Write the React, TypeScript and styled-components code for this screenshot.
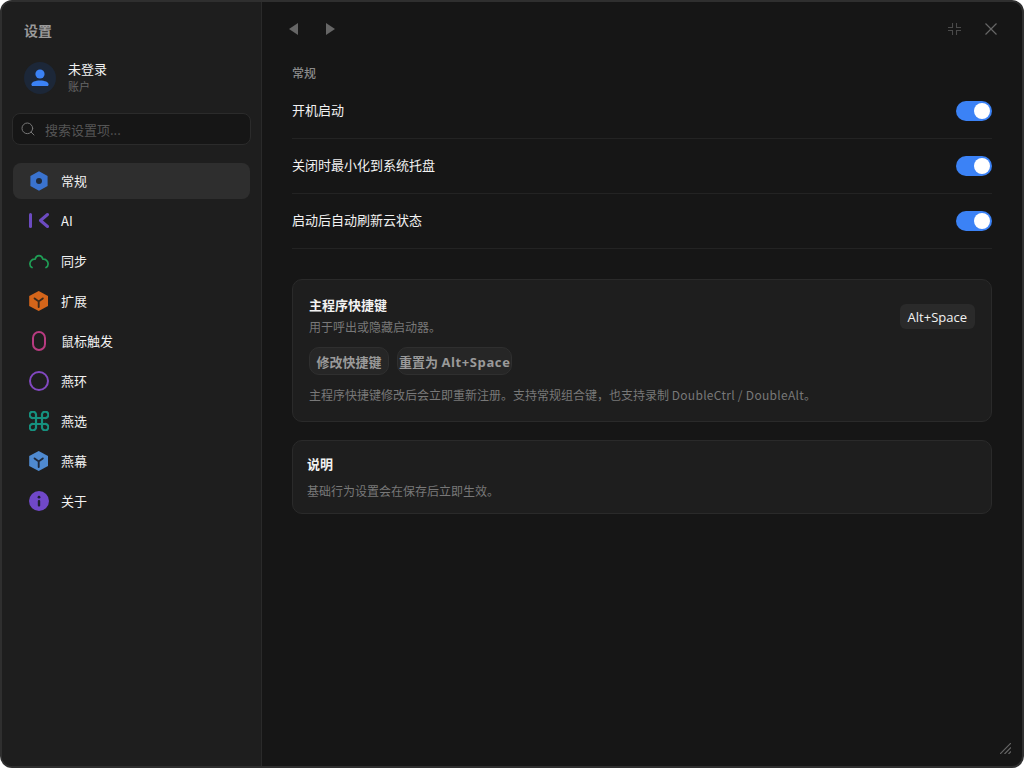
import React from 'react';
import styled, { createGlobalStyle } from 'styled-components';
import { Search } from 'lucide-react';

const Global = createGlobalStyle`
  html, body {
    margin: 0;
    padding: 0;
    background: #fff;
  }
  * {
    box-sizing: border-box;
  }
`;

const Win = styled.div`
  position: relative;
  width: 1024px;
  height: 768px;
  display: flex;
  overflow: hidden;
  border: 2px solid #2f2f2f;
  border-radius: 12px;
  background: #161616;
  font-family: 'Noto Sans CJK SC', 'Inter', sans-serif;
  color: #f2f2f2;
`;

const Side = styled.aside`
  width: 260px;
  flex: none;
  display: flex;
  flex-direction: column;
  padding: 18px 10px 0 10px;
  background: #1e1e1e;
  border-right: 1px solid #2a2a2a;
`;

const SideTitle = styled.div`
  margin-left: 12px;
  font-size: 14px;
  line-height: 20px;
  font-weight: 700;
  color: #9a9a9a;
`;

const User = styled.div`
  height: 32px;
  display: flex;
  align-items: center;
  gap: 12px;
  margin: 22px 0 0 12px;
`;

const Avatar = styled.div`
  width: 32px;
  height: 32px;
  display: flex;
  align-items: center;
  justify-content: center;
  border-radius: 50%;
  background: #1c2738;
`;

const UserText = styled.div`
  display: flex;
  flex-direction: column;
  padding-bottom: 2px;
`;

const UserName = styled.div`
  font-size: 13px;
  line-height: 18px;
`;

const UserSub = styled.div`
  margin-top: 1px;
  font-size: 11px;
  line-height: 15px;
  color: #666;
`;

const SearchBox = styled.div`
  height: 32px;
  margin-top: 19px;
  display: flex;
  align-items: center;
  gap: 9px;
  padding: 0 7px;
  border: 1px solid #2b2b2b;
  border-radius: 8px;
  background: #161616;
  color: #777;
  font-size: 13px;
  span {
    color: #555;
  }
`;

const Nav = styled.nav`
  display: flex;
  flex-direction: column;
  gap: 4px;
  margin: 18px 1px 0 1px;
`;

const NavItem = styled.div<{ $active?: boolean }>`
  height: 36px;
  display: flex;
  align-items: center;
  gap: 12px;
  padding-left: 16px;
  border-radius: 8px;
  font-size: 13px;
  background: ${(p) => (p.$active ? '#2e2e2e' : 'transparent')};
`;

const NavLabel = styled.span`
  margin-bottom: 2px;
`;

const Main = styled.main`
  flex: 1;
  display: flex;
  flex-direction: column;
  padding: 0 30px;
`;

const Top = styled.div`
  height: 62px;
  padding-bottom: 8px;
  display: flex;
  align-items: center;
  justify-content: space-between;
  flex: none;
`;

const TopGroup = styled.div<{ $gap: number; $side: number }>`
  display: flex;
  align-items: center;
  gap: ${(p) => p.$gap}px;
  margin: 0 ${(p) => p.$side}px;
`;

const SectionTitle = styled.div`
  font-size: 12px;
  line-height: 18px;
  font-weight: 500;
  color: #8a8a8a;
`;

const Rows = styled.div`
  margin-top: 2px;
  margin-bottom: 30px;
`;

const Row = styled.div`
  height: 55px;
  display: flex;
  align-items: center;
  justify-content: space-between;
  border-bottom: 1px solid #232323;
  font-size: 13px;
`;

const RowLabel = styled.span`
  margin-bottom: 4px;
`;

const Toggle = styled.div`
  width: 36px;
  height: 20px;
  padding: 2px;
  display: flex;
  justify-content: flex-end;
  border-radius: 10px;
  background: #3b82f6;
  &::after {
    content: '';
    width: 16px;
    height: 16px;
    border-radius: 50%;
    background: #fff;
  }
`;

const Card = styled.section<{ $pad: string }>`
  padding: ${(p) => p.$pad};
  margin-bottom: 18px;
  border: 1px solid #2a2a2a;
  border-radius: 10px;
  background: #1e1e1e;
`;

const CardHead = styled.div`
  display: flex;
  justify-content: space-between;
  align-items: flex-start;
`;

const CardTitle = styled.div`
  font-size: 13px;
  line-height: 18px;
  font-weight: 700;
`;

const Muted = styled.div<{ $top?: number }>`
  margin-top: ${(p) => p.$top ?? 4}px;
  font-size: 12px;
  line-height: 16px;
  color: #787878;
`;

const Latin = styled.span<{ $space: number }>`
  letter-spacing: ${(p) => p.$space}px;
`;

const Chip = styled.div`
  height: 25px;
  margin-top: 8px;
  display: flex;
  align-items: center;
  padding: 0 8px;
  border-radius: 6px;
  background: #2a2a2a;
  font-size: 13px;
  font-family: 'Open Sans', 'Noto Sans CJK SC', sans-serif;
`;

const Buttons = styled.div`
  display: flex;
  gap: 8px;
  margin-top: 12px;
`;

const Btn = styled.button<{ $pad: number }>`
  height: 28px;
  padding: 0 ${(p) => p.$pad}px;
  border: 1px solid #2f2f2f;
  border-radius: 10px;
  background: #262626;
  color: #9a9a9a;
  font-family: 'Open Sans', 'Noto Sans CJK SC', sans-serif;
  font-size: 13px;
  font-weight: 700;
  white-space: nowrap;
`;

const Grip = styled.svg`
  position: absolute;
  right: 11px;
  bottom: 12px;
`;

const HexCore = () => (
  <svg width="20" height="20" viewBox="0 0 20 20">
    <path d="M10 .2 18.6 5v10L10 19.8 1.4 15V5z" fill="#3a73cf" />
    <circle cx="10" cy="10" r="3" fill="#1f2a3a" />
  </svg>
);

const IconAI = () => (
  <svg width="20" height="20" viewBox="0 0 20 20" fill="none" stroke="#6c4bc0" strokeWidth="3" strokeLinecap="round" strokeLinejoin="round">
    <path d="M1.5 3.5v12" />
    <path d="M18.5 3.5 11.5 9.5l7 6" />
  </svg>
);

const IconCloud = () => (
  <svg width="20" height="20" viewBox="0 0 20 20" fill="none" stroke="#1f9d55" strokeWidth="1.7" strokeLinecap="round">
    <path d="M3 16.5C1.3 15.7.8 14 .9 12.6 1 10 3.3 8 6 8.2 6.8 5.8 8.3 4.6 10 4.6s3.2 1.2 4 3.6c2.7-.2 5 1.8 5.1 4.4.1 1.4-.4 3.1-2.1 3.9" />
  </svg>
);

const Cube = ({ color, dark }: { color: string; dark: string }) => (
  <svg width="20" height="20" viewBox="0 0 20 20">
    <path d="M9.7 0 19 5v10L9.7 20 .2 15V5z" fill={color} />
    <path d="M5.6 7.4 9.7 10.4l4.1-3M9.7 10.4V16" fill="none" stroke={dark} strokeWidth="1.9" strokeLinecap="round" />
  </svg>
);

const IconMouse = () => (
  <svg width="20" height="20" viewBox="0 0 20 20" fill="none" stroke="#b83b80" strokeWidth="2">
    <rect x="4" y="1" width="12" height="18" rx="6" />
  </svg>
);

const IconRing = () => (
  <svg width="20" height="20" viewBox="0 0 20 20" fill="none" stroke="#8248c0" strokeWidth="2">
    <circle cx="10" cy="10" r="9" />
  </svg>
);

const IconCmd = () => (
  <svg width="20" height="20" viewBox="0 0 20 20" fill="none" stroke="#16917f" strokeWidth="2.2">
    <path d="M7 7h6v6H7zM7 7H4.4A3.2 3.2 0 1 1 7 4.4zM13 7V4.4A3.2 3.2 0 1 1 15.6 7zM13 13h2.6A3.2 3.2 0 1 1 13 15.6zM7 13v2.6A3.2 3.2 0 1 1 4.4 13z" />
  </svg>
);

const IconInfo = () => (
  <svg width="20" height="20" viewBox="0 0 20 20">
    <circle cx="10" cy="10" r="10" fill="#7048c8" />
    <circle cx="10" cy="6.2" r="1.4" fill="#1e2030" />
    <rect x="8.8" y="9" width="2.4" height="6.6" rx="1" fill="#1e2030" />
  </svg>
);

const navItems = [
  { label: '常规', icon: <HexCore />, active: true },
  { label: 'AI', icon: <IconAI /> },
  { label: '同步', icon: <IconCloud /> },
  { label: '扩展', icon: <Cube color="#d4651a" dark="#3a2a1c" /> },
  { label: '鼠标触发', icon: <IconMouse /> },
  { label: '燕环', icon: <IconRing /> },
  { label: '燕选', icon: <IconCmd /> },
  { label: '燕幕', icon: <Cube color="#4f8ad0" dark="#20293a" /> },
  { label: '关于', icon: <IconInfo /> },
];

const settings = ['开机启动', '关闭时最小化到系统托盘', '启动后自动刷新云状态'];

export default function App() {
  return (
    <>
      <Global />
      <Win>
        <Side>
          <SideTitle>设置</SideTitle>
          <User>
            <Avatar>
              <svg width="18" height="18" viewBox="0 0 18 18" fill="#3b82f6">
                <circle cx="9" cy="5" r="4.6" />
                <path d="M.4 15.4c0-2.4 3.6-4 8.6-4s8.6 1.6 8.6 4c0 .8-.5 1.6-1.4 1.6H1.8C.9 17 .4 16.2.4 15.4z" />
              </svg>
            </Avatar>
            <UserText>
              <UserName>未登录</UserName>
              <UserSub>账户</UserSub>
            </UserText>
          </User>
          <SearchBox>
            <Search size={16} strokeWidth={1.5} />
            <span>搜索设置项...</span>
          </SearchBox>
          <Nav>
            {navItems.map((item) => (
              <NavItem key={item.label} $active={item.active}>
                {item.icon}
                <NavLabel>{item.label}</NavLabel>
              </NavItem>
            ))}
          </Nav>
        </Side>
        <Main>
          <Top>
            <TopGroup $gap={28} $side={-3}>
              <svg width="9" height="12" viewBox="0 0 9 12" fill="#666"><path d="M9 0v12L0 6z" /></svg>
              <svg width="9" height="12" viewBox="0 0 9 12" fill="#666"><path d="M0 0v12l9-6z" /></svg>
            </TopGroup>
            <TopGroup $gap={24} $side={-5}>
              <svg width="13" height="12" viewBox="0 0 13 12" fill="none" stroke="#4a4a4a" strokeWidth="1.1">
                <path d="M4.5 0v4.5H0M8.5 0v4.5H13M4.5 12V7.5H0M8.5 12V7.5H13" />
              </svg>
              <svg width="12" height="12" viewBox="0 0 12 12" fill="none" stroke="#666" strokeWidth="1.2">
                <path d="M.5.5l11 11M11.5.5l-11 11" />
              </svg>
            </TopGroup>
          </Top>
          <SectionTitle>常规</SectionTitle>
          <Rows>
            {settings.map((text) => (
              <Row key={text}>
                <RowLabel>{text}</RowLabel>
                <Toggle />
              </Row>
            ))}
          </Rows>
          <Card $pad="16px 16px 18px 16px">
            <CardHead>
              <div>
                <CardTitle>主程序快捷键</CardTitle>
                <Muted $top={5}>用于呼出或隐藏启动器。</Muted>
              </div>
              <Chip>Alt+Space</Chip>
            </CardHead>
            <Buttons>
              <Btn $pad={6.5}>修改快捷键</Btn>
              <Btn $pad={1}>
                重置为 <Latin $space={0.6}>Alt+Space</Latin>
              </Btn>
            </Buttons>
            <Muted $top={12}>
              主程序快捷键修改后会立即重新注册。支持常规组合键，也支持录制 <Latin $space={0.3}>DoubleCtrl / DoubleAlt</Latin>。
            </Muted>
          </Card>
          <Card $pad="14px 14px 14px 14px">
            <CardTitle>说明</CardTitle>
            <Muted $top={10}>基础行为设置会在保存后立即生效。</Muted>
          </Card>
        </Main>
        <Grip width="11" height="11" viewBox="0 0 11 11" stroke="#666" strokeWidth="1.2">
          <path d="M0 11 11 0M4.5 11 11 4.5M8.5 11 11 8.5" />
        </Grip>
      </Win>
    </>
  );
}
